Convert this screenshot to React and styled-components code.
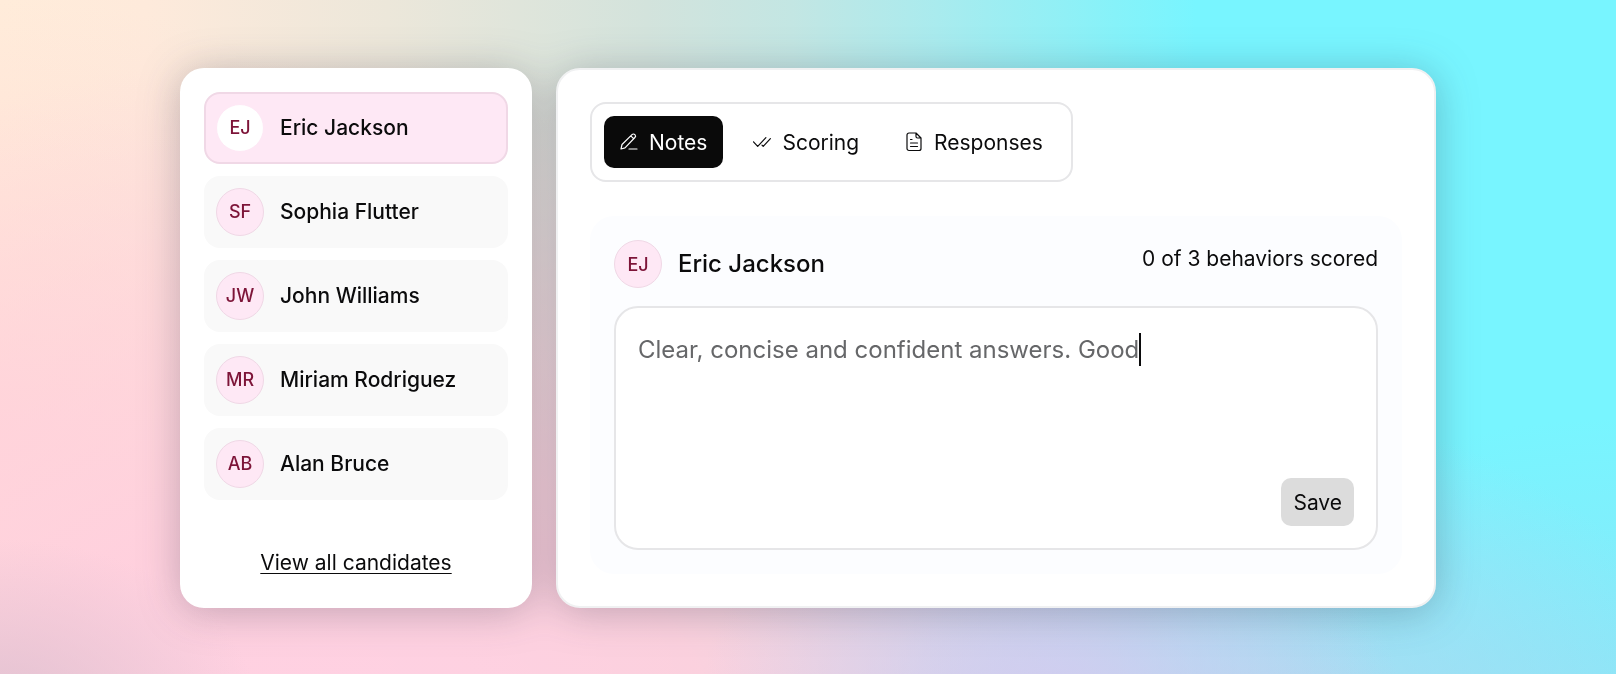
import React, { useState } from 'react';
import styled, { createGlobalStyle, ThemeProvider } from 'styled-components';

const theme = {
  colors: {
    text: '#0b0b0c',
    muted: '#666769',
    border: '#e6e6e8',
    row: '#f9f9f9',
    panel: '#fcfdff',
    pink: '#fee8f5',
    pinkBorder: '#f0d8e6',
    initials: '#7d1438',
    button: '#dcdcdc',
  },
  breakpoint: '1000px',
};

const GlobalStyle = createGlobalStyle`
  *, *::before, *::after {
    box-sizing: border-box;
  }

  body {
    margin: 0;
    color: ${theme.colors.text};
  }

  body, button, textarea {
    font-family: Inter, 'Open Sans', sans-serif;
  }
`;

const Page = styled.main`
  min-height: 100vh;
  display: flex;
  padding: 68px 180px 66px;
  background:
    radial-gradient(ellipse 16% 26% at 0% 106%, rgba(222, 192, 208, 0.9), rgba(222, 192, 208, 0) 100%),
    radial-gradient(ellipse 22% 50% at 65% 110%, rgba(212, 202, 240, 1), rgba(212, 202, 240, 0) 100%),
    radial-gradient(ellipse 26% 50% at 80% 112%, rgba(176, 216, 240, 1), rgba(176, 216, 240, 0) 100%),
    radial-gradient(ellipse 64% 104% at 22% 112%, #ffd1e4 0%, rgba(255, 207, 222, 0.92) 35%, rgba(255, 208, 220, 0) 100%),
    radial-gradient(ellipse 36% 64% at 0% 64%, rgba(255, 218, 214, 1), rgba(255, 222, 214, 0) 100%),
    radial-gradient(ellipse 30% 50% at 100% 112%, rgba(144, 226, 246, 0.9), rgba(144, 226, 246, 0) 100%),
    linear-gradient(90deg, #ffecda 0%, #feeadb 9%, #ece7da 24%, #d3e3dc 40%, #c3e6e3 49%, #a9ebee 58%, #86f2f9 69%, #78f5ff 74%, #78f5ff 100%);

  @media (max-width: ${(props) => props.theme.breakpoint}) {
    padding: 24px;
  }
`;

const Cards = styled.div`
  flex: 1;
  min-width: 0;
  display: flex;
  gap: 24px;
  filter: drop-shadow(0 4px 20px rgba(40, 40, 60, 0.28));

  @media (max-width: ${(props) => props.theme.breakpoint}) {
    flex-direction: column;
  }
`;

const Card = styled.section`
  background: #fff;
  border-radius: 24px;
`;

const Sidebar = styled(Card)`
  flex: 0 0 352px;
  display: flex;
  flex-direction: column;
  justify-content: space-between;
  align-items: center;
  padding: 24px 24px 30px;
`;

const CandidateList = styled.ul`
  list-style: none;
  margin: 0;
  padding: 0;
  width: 100%;
  display: flex;
  flex-direction: column;
  gap: 12px;
`;

const Avatar = styled.span`
  flex: none;
  width: 48px;
  height: 48px;
  display: grid;
  place-items: center;
  border-radius: 50%;
  border: 1px solid ${(props) => (props.$light ? props.theme.colors.pink : props.theme.colors.pinkBorder)};
  background: ${(props) => (props.$light ? '#fff' : props.theme.colors.pink)};
  color: ${(props) => props.theme.colors.initials};
  font-size: 18px;
  font-weight: 500;
`;

const CandidateButton = styled.button`
  width: 100%;
  height: 72px;
  display: flex;
  align-items: center;
  gap: 16px;
  padding: 0 10px;
  border: 2px solid ${(props) => (props.$active ? props.theme.colors.pinkBorder : props.theme.colors.row)};
  border-radius: 16px;
  background: ${(props) => (props.$active ? props.theme.colors.pink : props.theme.colors.row)};
  color: inherit;
  font-size: 21px;
  font-weight: 500;
  line-height: 24px;
  text-align: left;
  cursor: pointer;
`;

const AllLink = styled.a`
  color: inherit;
  font-size: 21px;
  line-height: 30px;
  text-decoration: underline;
  text-decoration-thickness: 1px;
  text-underline-offset: 3px;
`;

const Content = styled(Card)`
  flex: 1;
  min-width: 0;
  display: flex;
  flex-direction: column;
  align-items: flex-start;
  gap: 34px;
  padding: 32px;
  border: 2px solid #f0f1f2;
`;

const TabBar = styled.div`
  display: flex;
  gap: 14px;
  padding: 12px;
  border: 2px solid ${(props) => props.theme.colors.border};
  border-radius: 16px;
`;

const Tab = styled.button`
  height: 52px;
  display: flex;
  align-items: center;
  gap: 11px;
  padding: 0 16px;
  border: 0;
  border-radius: 10px;
  background: ${(props) => (props.$active ? '#0a0a0a' : 'transparent')};
  color: ${(props) => (props.$active ? '#fff' : 'inherit')};
  font-size: 21px;
  cursor: pointer;

  svg {
    flex: none;
    width: 18px;
    height: 20px;
  }
`;

const Panel = styled.div`
  flex: 1;
  width: 100%;
  display: flex;
  flex-direction: column;
  gap: 18px;
  padding: 24px;
  border-radius: 24px;
  background: ${(props) => props.theme.colors.panel};
`;

const PanelHeader = styled.header`
  display: flex;
  align-items: center;
  gap: 16px;
`;

const Name = styled.h2`
  margin: 0;
  font-size: 24px;
  line-height: 36px;
  font-weight: 500;
`;

const Progress = styled.p`
  align-self: flex-start;
  margin: 4px 0 0 auto;
  font-size: 21px;
  line-height: 30px;
`;

const Editor = styled.div`
  position: relative;
  flex: 1;
  display: flex;
  flex-direction: column;
  min-height: 240px;
  padding: 22px;
  border: 2px solid ${(props) => props.theme.colors.border};
  border-radius: 24px;
  background: #fff;
`;

const NoteField = styled.textarea`
  flex: 1;
  width: 100%;
  padding: 2px 0;
  border: 0;
  outline: 0;
  resize: none;
  background: transparent;
  color: ${(props) => props.theme.colors.muted};
  font-size: 24px;
  line-height: 36px;
`;

// Repeats the note invisibly so the caret follows its last character
const CaretLine = styled.div`
  position: absolute;
  inset: 24px 22px auto;
  font-size: 24px;
  line-height: 36px;
  color: transparent;
  pointer-events: none;

  span {
    border-right: 2px solid ${(props) => props.theme.colors.text};
    padding: 2px 0;
  }
`;

const SaveButton = styled.button`
  align-self: flex-end;
  height: 48px;
  padding: 0 12px;
  border: 0;
  border-radius: 10px;
  background: ${(props) => props.theme.colors.button};
  color: inherit;
  font-size: 21px;
  cursor: pointer;
`;

const PenIcon = () => (
  <svg viewBox="0 0 18 20" fill="none" stroke="currentColor" strokeWidth="1.2" strokeLinejoin="round" strokeLinecap="round" aria-hidden="true">
    <path d="M1 17 2 12.5 12 2.6a2 2 0 0 1 2.9 2.9L5 15.9z M10.8 3.9l2.8 2.8 M9 17h8" />
  </svg>
);

const ChecksIcon = () => (
  <svg viewBox="0 0 18 20" fill="none" stroke="currentColor" strokeWidth="1.2" strokeLinejoin="round" strokeLinecap="round" aria-hidden="true">
    <path d="M.5 9.8 4.7 14.4l8.2-8.8 M9 13.2l1.2 1.2 7.2-7.8" />
  </svg>
);

const DocIcon = () => (
  <svg viewBox="0 0 18 20" fill="none" stroke="currentColor" strokeWidth="1.2" strokeLinejoin="round" strokeLinecap="round" aria-hidden="true">
    <path d="M4 1h7l5 5v10.500a2 2 0 0 1-2 2H4a2 2 0 0 1-2-2V3a2 2 0 0 1 2-2z M11 1v3.5A1.500 1.500 0 0 0 12.5 6H16 M5.5 7.500H7 M5.5 11h7 M5.5 14.5h7" />
  </svg>
);

const candidates = [
  { name: 'Eric Jackson', initials: 'EJ' },
  { name: 'Sophia Flutter', initials: 'SF' },
  { name: 'John Williams', initials: 'JW' },
  { name: 'Miriam Rodriguez', initials: 'MR' },
  { name: 'Alan Bruce', initials: 'AB' },
];

const tabs = [
  { label: 'Notes', Icon: PenIcon },
  { label: 'Scoring', Icon: ChecksIcon },
  { label: 'Responses', Icon: DocIcon },
];

const App = () => {
  const [selected, setSelected] = useState(0);
  const [tab, setTab] = useState('Notes');
  const [note, setNote] = useState('Clear, concise and confident answers. Good');
  const current = candidates[selected];

  return (
    <ThemeProvider theme={theme}>
      <GlobalStyle />
      <Page>
        <Cards>
          <Sidebar>
            <CandidateList>
              {candidates.map((candidate, index) => (
                <li key={candidate.initials}>
                  <CandidateButton
                    type="button"
                    $active={index === selected}
                    aria-pressed={index === selected}
                    onClick={() => setSelected(index)}
                  >
                    <Avatar $light={index === selected}>{candidate.initials}</Avatar>
                    {candidate.name}
                  </CandidateButton>
                </li>
              ))}
            </CandidateList>
            <AllLink href="#candidates">View all candidates</AllLink>
          </Sidebar>

          <Content>
            <TabBar role="tablist">
              {tabs.map(({ label, Icon }) => (
                <Tab
                  key={label}
                  type="button"
                  role="tab"
                  aria-selected={label === tab}
                  $active={label === tab}
                  onClick={() => setTab(label)}
                >
                  <Icon />
                  {label}
                </Tab>
              ))}
            </TabBar>

            <Panel>
              <PanelHeader>
                <Avatar>{current.initials}</Avatar>
                <Name id="candidate-name">{current.name}</Name>
                <Progress>0 of 3 behaviors scored</Progress>
              </PanelHeader>
              <Editor>
                <NoteField
                  aria-labelledby="candidate-name"
                  spellCheck={false}
                  value={note}
                  onChange={(event) => setNote(event.target.value)}
                />
                <CaretLine aria-hidden="true">
                  <span>{note}</span>
                </CaretLine>
                <SaveButton type="button">Save</SaveButton>
              </Editor>
            </Panel>
          </Content>
        </Cards>
      </Page>
    </ThemeProvider>
  );
};

export default App;
